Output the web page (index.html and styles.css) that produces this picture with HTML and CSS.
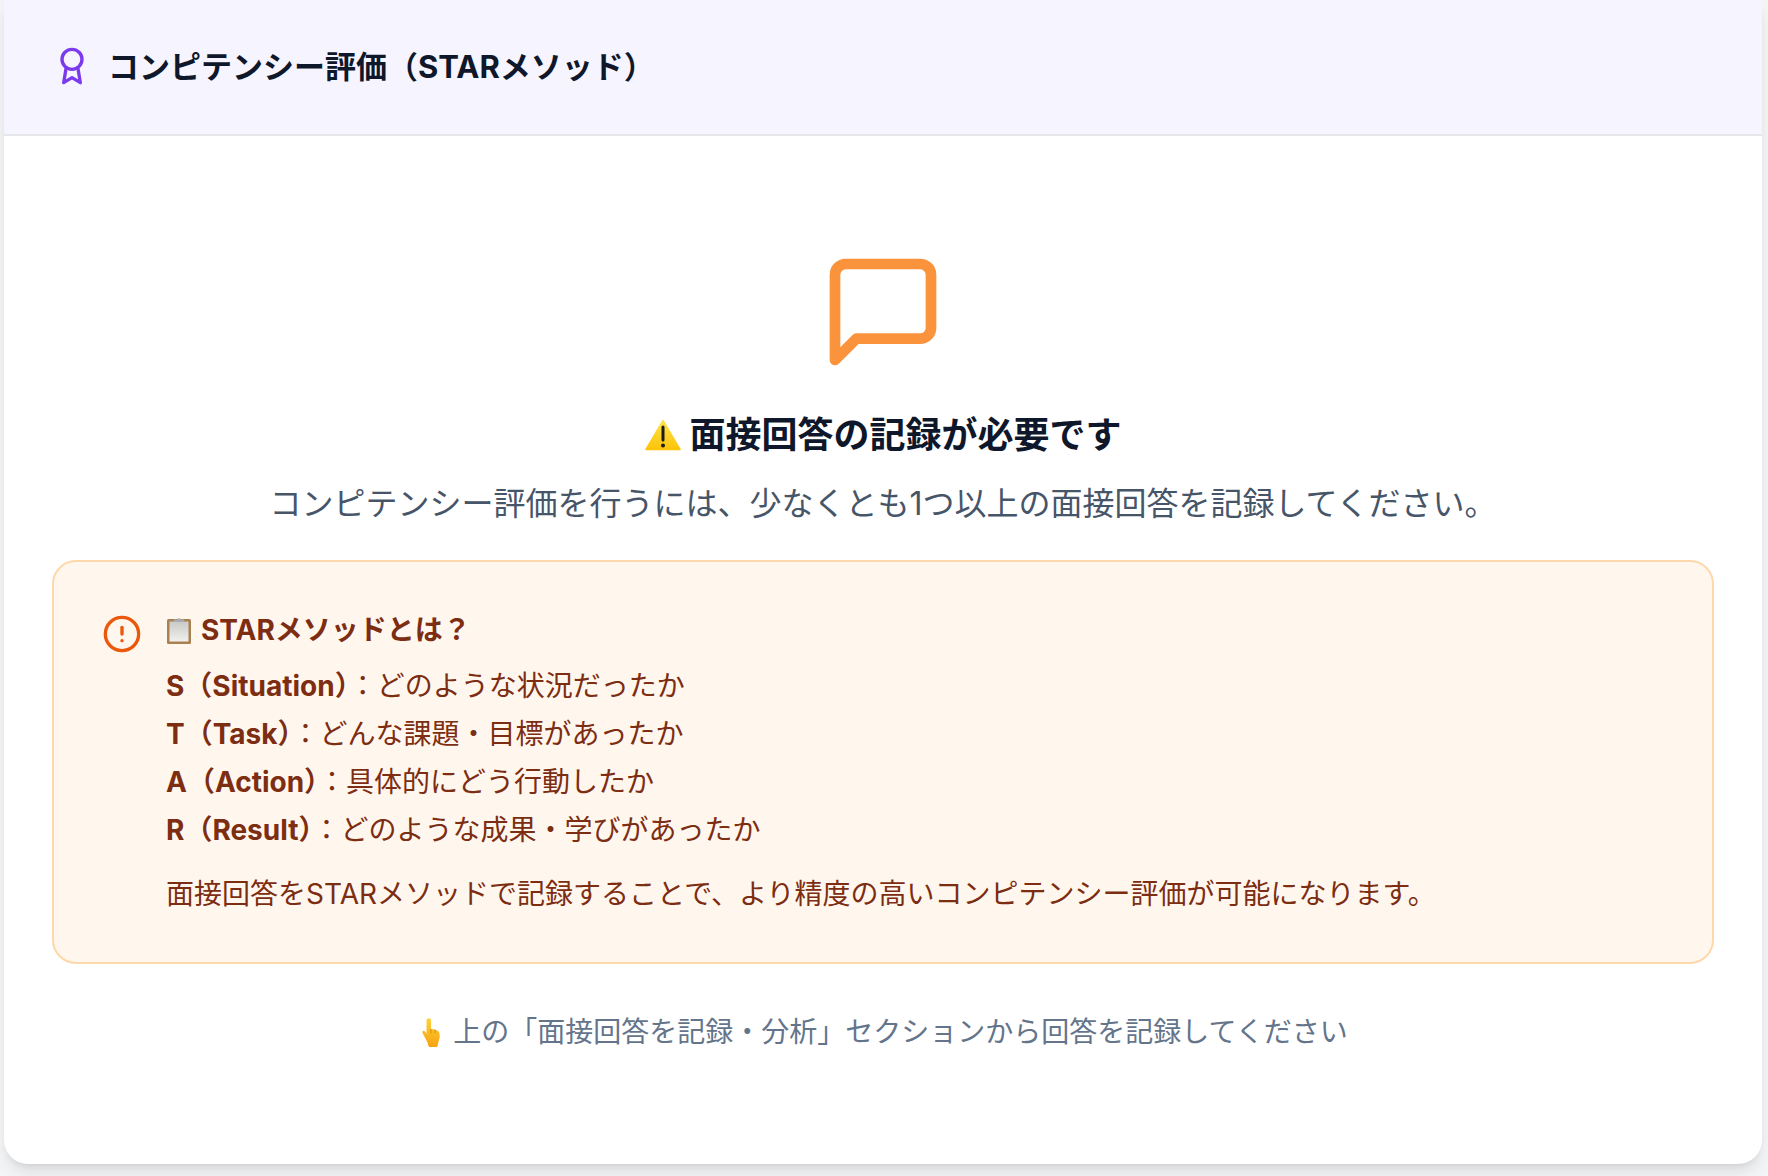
FILE: index.html
```html
<!DOCTYPE html>
<html lang="ja">
<head>
  <meta charset="UTF-8" />
  <meta name="viewport" content="width=device-width, initial-scale=1.0"/>
  <title>コンピテンシー評価</title>
  <link rel="stylesheet" href="styles.css">
</head>
<body>
  <div class="card">
    <div class="card-header">
      <svg class="award-icon" viewBox="0 0 24 24" fill="none" stroke="currentColor" stroke-width="2" stroke-linecap="round" stroke-linejoin="round">
        <circle cx="12" cy="8" r="6"/>
        <path d="M8.500 13 7 22l5-3 5 3-1.500-9"/>
      </svg>
      <h2 class="card-title">コンピテンシー評価（STARメソッド）</h2>
    </div>

    <div class="card-body">
      <svg class="chat-icon" viewBox="0 0 24 24" fill="none" stroke="currentColor" stroke-width="2" stroke-linecap="round" stroke-linejoin="round">
        <path d="M21 15a2 2 0 0 1-2 2H7l-4 4V5a2 2 0 0 1 2-2h14a2 2 0 0 1 2 2z"/>
      </svg>

      <h3 class="empty-title">
        <svg class="emoji-warning" viewBox="0 0 36 32">
          <defs>
            <linearGradient id="warnFill" x1="0" y1="0" x2="0" y2="1">
              <stop offset="0" stop-color="#fde24a"/>
              <stop offset="1" stop-color="#fcc40a"/>
            </linearGradient>
          </defs>
          <path d="M18 1.500 35 30.500H1z" fill="url(#warnFill)" stroke="url(#warnFill)" stroke-width="1.500" stroke-linejoin="round"/>
          <path d="M18 8v13" stroke="#1c1c1c" stroke-width="3" stroke-linecap="round"/>
          <circle cx="18" cy="26.500" r="2" fill="#1c1c1c"/>
        </svg>
        面接回答の記録が必要です
      </h3>
      <p class="empty-text">コンピテンシー評価を行うには、少なくとも1つ以上の面接回答を記録してください。</p>

      <div class="notice">
        <svg class="notice-icon" viewBox="0 0 24 24" fill="none" stroke="currentColor" stroke-width="2" stroke-linecap="round" stroke-linejoin="round">
          <circle cx="12" cy="12" r="10"/>
          <line x1="12" y1="8" x2="12" y2="12"/>
          <line x1="12" y1="16" x2="12.01" y2="16"/>
        </svg>
        <div class="notice-content">
          <h4 class="notice-title">
            <svg class="emoji-clipboard" viewBox="0 0 24 28">
              <defs>
                <linearGradient id="paperFill" x1="0" y1="0" x2="0" y2="1">
                  <stop offset="0" stop-color="#c9c9c7"/>
                  <stop offset="1" stop-color="#f0f0ee"/>
                </linearGradient>
              </defs>
              <rect x="0" y="3" width="24" height="25" rx="1.500" fill="#ab8050"/>
              <rect x="2.500" y="5.500" width="19" height="20" fill="url(#paperFill)"/>
              <path d="M7 6V3.500h3.300a1.800 1.800 0 0 1 3.400 0H17V6z" fill="#a7adb3"/>
            </svg>
            STARメソッドとは？
          </h4>
          <ul class="star-list">
            <li><strong>S（Situation）</strong>：どのような状況だったか</li>
            <li><strong>T（Task）</strong>：どんな課題・目標があったか</li>
            <li><strong>A（Action）</strong>：具体的にどう行動したか</li>
            <li><strong>R（Result）</strong>：どのような成果・学びがあったか</li>
          </ul>
          <p class="notice-note">面接回答をSTARメソッドで記録することで、より精度の高いコンピテンシー評価が可能になります。</p>
        </div>
      </div>

      <p class="hint">
        <svg class="emoji-finger" viewBox="0 0 19 29">
          <defs>
            <linearGradient id="fingerFill" x1="0" y1="0" x2="0" y2="1">
              <stop offset="0" stop-color="#ffd23c"/>
              <stop offset="1" stop-color="#f5a30f"/>
            </linearGradient>
          </defs>
          <path d="M4.500 2.500c0-3 4.500-3 4.500 0V11c3 .2 7 1 8 3 1 2.500 1 6-.3 9-.7 3-1.500 6-1.700 6H7.500c-1 0-1.200-2-2-4.500L.5 15c-.8-2 1.500-3 2.500-1.500l1.500 2z" fill="url(#fingerFill)"/>
          <path d="M9 11v4.500M13 11.800v3.500" stroke="#d98a12" stroke-width="1" fill="none"/>
        </svg>
        上の「面接回答を記録・分析」セクションから回答を記録してください
      </p>
    </div>
  </div>
</body>
</html>
```

FILE: styles.css
```css
* { box-sizing: border-box; }

body {
  margin: 0;
  padding: 0 6px 12px 4px;
  background: #f3f4f6;
  font-family: Inter, "Noto Sans CJK JP", sans-serif;
}

.card {
  background: #fff;
  border-radius: 0 0 24px 24px;
  box-shadow: 0 10px 15px -3px rgba(0, 0, 0, 0.1), 0 4px 6px -4px rgba(0, 0, 0, 0.1);
  overflow: hidden;
  height: 1164px;
}

.card-header {
  display: flex;
  align-items: center;
  gap: 16px;
  height: 136px;
  padding: 0 48px;
  background: #f6f4fe;
  border-bottom: 2px solid #e5e7eb;
}
.award-icon { width: 40px; height: 40px; margin-bottom: 2px; color: #7c3aed; }
.card-title { margin: 0; padding-bottom: 6px; font-size: 31px; font-weight: 700; color: #0f172a; }

.card-body {
  display: flex;
  flex-direction: column;
  align-items: center;
  padding: 112px 48px 0;
}
.chat-icon { width: 128px; height: 128px; color: #fb923c; }

.empty-title {
  display: flex;
  align-items: center;
  gap: 8px;
  margin: 35px 0 0 1px;
  font-size: 36px;
  line-height: 48px;
  font-weight: 700;
  color: #0f172a;
}
.emoji-warning { width: 36px; height: 32px; }

.empty-text {
  margin: 23px 0 0;
  font-size: 32px;
  line-height: 44px;
  color: #475569;
}

.notice {
  display: flex;
  gap: 24px;
  width: 100%;
  margin-top: 34px;
  padding: 48px 48px 44px 48px;
  background: #fff7ed;
  border: 2px solid #fed7aa;
  border-radius: 24px;
  color: #7c2d12;
}
.notice-icon { flex: none; width: 40px; height: 40px; color: #ea580c; margin-top: 4px; }
.notice-title {
  display: flex;
  align-items: center;
  gap: 10px;
  margin: 0;
  font-size: 28px;
  line-height: 40px;
  font-weight: 700;
}
.emoji-clipboard { width: 24px; height: 28px; margin-left: 1px; }

.star-list { list-style: none; margin: 12px 0 0; padding: 0; }
.star-list li { font-size: 28px; line-height: 48px; }
.star-list strong { font-weight: 700; }

.notice-note { margin: 16px 0 0; font-size: 28px; line-height: 48px; }

.hint {
  display: flex;
  align-items: center;
  gap: 12px;
  margin: 44px 0 0 4px;
  font-size: 28px;
  line-height: 48px;
  color: #64748b;
}
.emoji-finger { width: 19px; height: 29px; }
```
